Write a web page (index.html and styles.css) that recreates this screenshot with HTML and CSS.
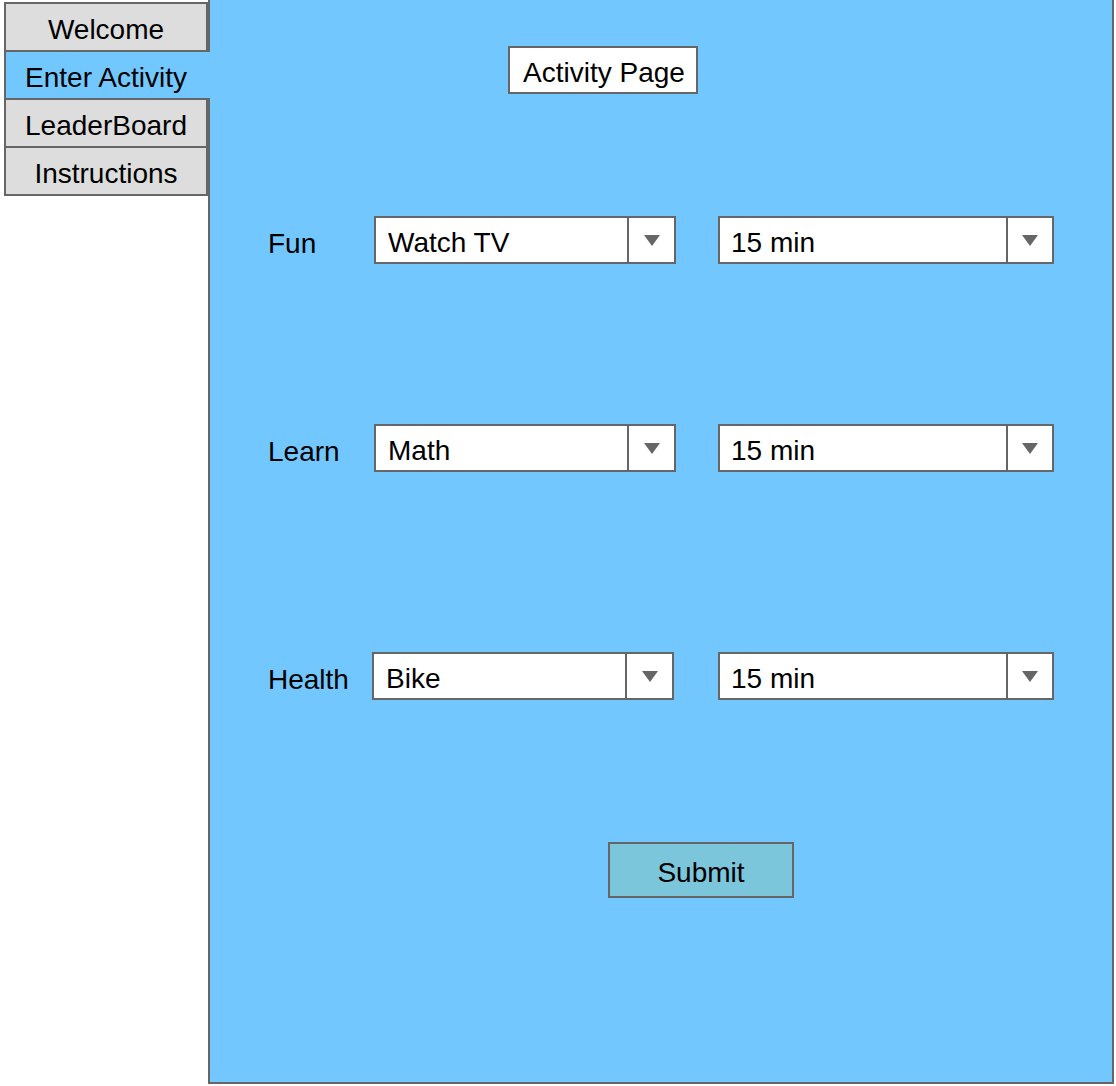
FILE: index.html
```html
<!DOCTYPE html>
<html lang="en">
<head>
<meta charset="utf-8">
<title>Activity Page</title>
<link rel="stylesheet" href="styles.css">
</head>
<body>
<div class="app">
  <nav class="sidebar">
    <div class="tab">Welcome</div>
    <div class="tab tab-active">Enter Activity</div>
    <div class="tab">LeaderBoard</div>
    <div class="tab">Instructions</div>
  </nav>
  <main class="panel">
    <div class="title-box"><span class="title-text">Activity Page</span></div>

    <div class="row row-fun">
      <div class="label">Fun</div>
      <div class="select select-act"><span class="value">Watch TV</span><span class="arrow"><span class="tri"></span></span></div>
      <div class="select select-time"><span class="value">15 min</span><span class="arrow"><span class="tri"></span></span></div>
    </div>

    <div class="row row-learn">
      <div class="label">Learn</div>
      <div class="select select-act"><span class="value">Math</span><span class="arrow"><span class="tri"></span></span></div>
      <div class="select select-time"><span class="value">15 min</span><span class="arrow"><span class="tri"></span></span></div>
    </div>

    <div class="row row-health">
      <div class="label">Health</div>
      <div class="select select-act"><span class="value">Bike</span><span class="arrow"><span class="tri"></span></span></div>
      <div class="select select-time"><span class="value">15 min</span><span class="arrow"><span class="tri"></span></span></div>
    </div>

    <div class="submit">Submit</div>
  </main>
</div>
</body>
</html>
```

FILE: styles.css
```css
html, body {
  margin: 0;
  padding: 0;
  background: #ffffff;
  overflow: hidden;
}

body {
  font-family: "Liberation Sans", Arial, Helvetica, sans-serif;
  font-size: 28px;
  color: #000;
}

.app {
  display: flex;
  align-items: flex-start;
  padding-left: 4px;
  width: 1116px;
  height: 1086px;
  box-sizing: border-box;
}

.sidebar {
  width: 204px;
  margin-top: 2px;
  flex: none;
}

.tab {
  box-sizing: border-box;
  height: 50px;
  width: 204px;
  border: 2px solid #666;
  margin-top: -2px;
  background: #dddddd;
  display: flex;
  align-items: center;
  justify-content: center;
  padding-top: 6px;
  white-space: nowrap;
}

.tab:first-child {
  margin-top: 0;
}

.tab-active {
  position: relative;
  z-index: 1;
  width: 206px;
  border-right: none;
  padding-right: 4px;
  background: #72c8fe;
}

.panel {
  flex: none;
  box-sizing: border-box;
  width: 906px;
  height: 1086px;
  margin-top: -2px;
  border: 2px solid #666;
  background: #72c8fe;
  display: flex;
  flex-direction: column;
  align-items: flex-start;
}

.title-box {
  box-sizing: border-box;
  width: 190px;
  height: 48px;
  margin-top: 46px;
  margin-left: 298px;
  border: 2px solid #666;
  background: #fff;
  display: flex;
  align-items: center;
  padding: 5px 0 0 13px;
  overflow: hidden;
  white-space: nowrap;
}

.title-text {
  display: block;
  width: 163px;
  overflow: hidden;
}

.row {
  display: flex;
  align-items: center;
  padding-left: 58px;
}

.row-fun { margin-top: 122px; }
.row-learn { margin-top: 160px; }
.row-health { margin-top: 180px; }

.label {
  width: 106px;
  padding-top: 8px;
  white-space: nowrap;
}

.select {
  box-sizing: border-box;
  height: 48px;
  border: 2px solid #666;
  background: #fff;
  display: flex;
  align-items: stretch;
}

.select-act {
  width: 302px;
}

.row-health .select-act {
  margin-left: -2px;
}

.select-time {
  width: 336px;
  margin-left: 42px;
}

.row-health .select-time {
  margin-left: 44px;
}

.value {
  flex: 1;
  display: flex;
  align-items: center;
  padding: 6px 0 0 12px;
  white-space: nowrap;
}

.select-time .value {
  padding-left: 11px;
}

.arrow {
  box-sizing: border-box;
  width: 47px;
  border-left: 2px solid #666;
  display: flex;
  align-items: center;
  justify-content: center;
}

.select-time .arrow {
  width: 46px;
}

.tri {
  width: 0;
  height: 0;
  border-left: 8px solid transparent;
  border-right: 8px solid transparent;
  border-top: 11px solid #666;
}

.submit {
  box-sizing: border-box;
  width: 186px;
  height: 56px;
  margin-top: 142px;
  margin-left: 398px;
  border: 2px solid #666;
  background: #7bc6da;
  display: flex;
  align-items: center;
  justify-content: center;
  padding-top: 5px;
}
```
